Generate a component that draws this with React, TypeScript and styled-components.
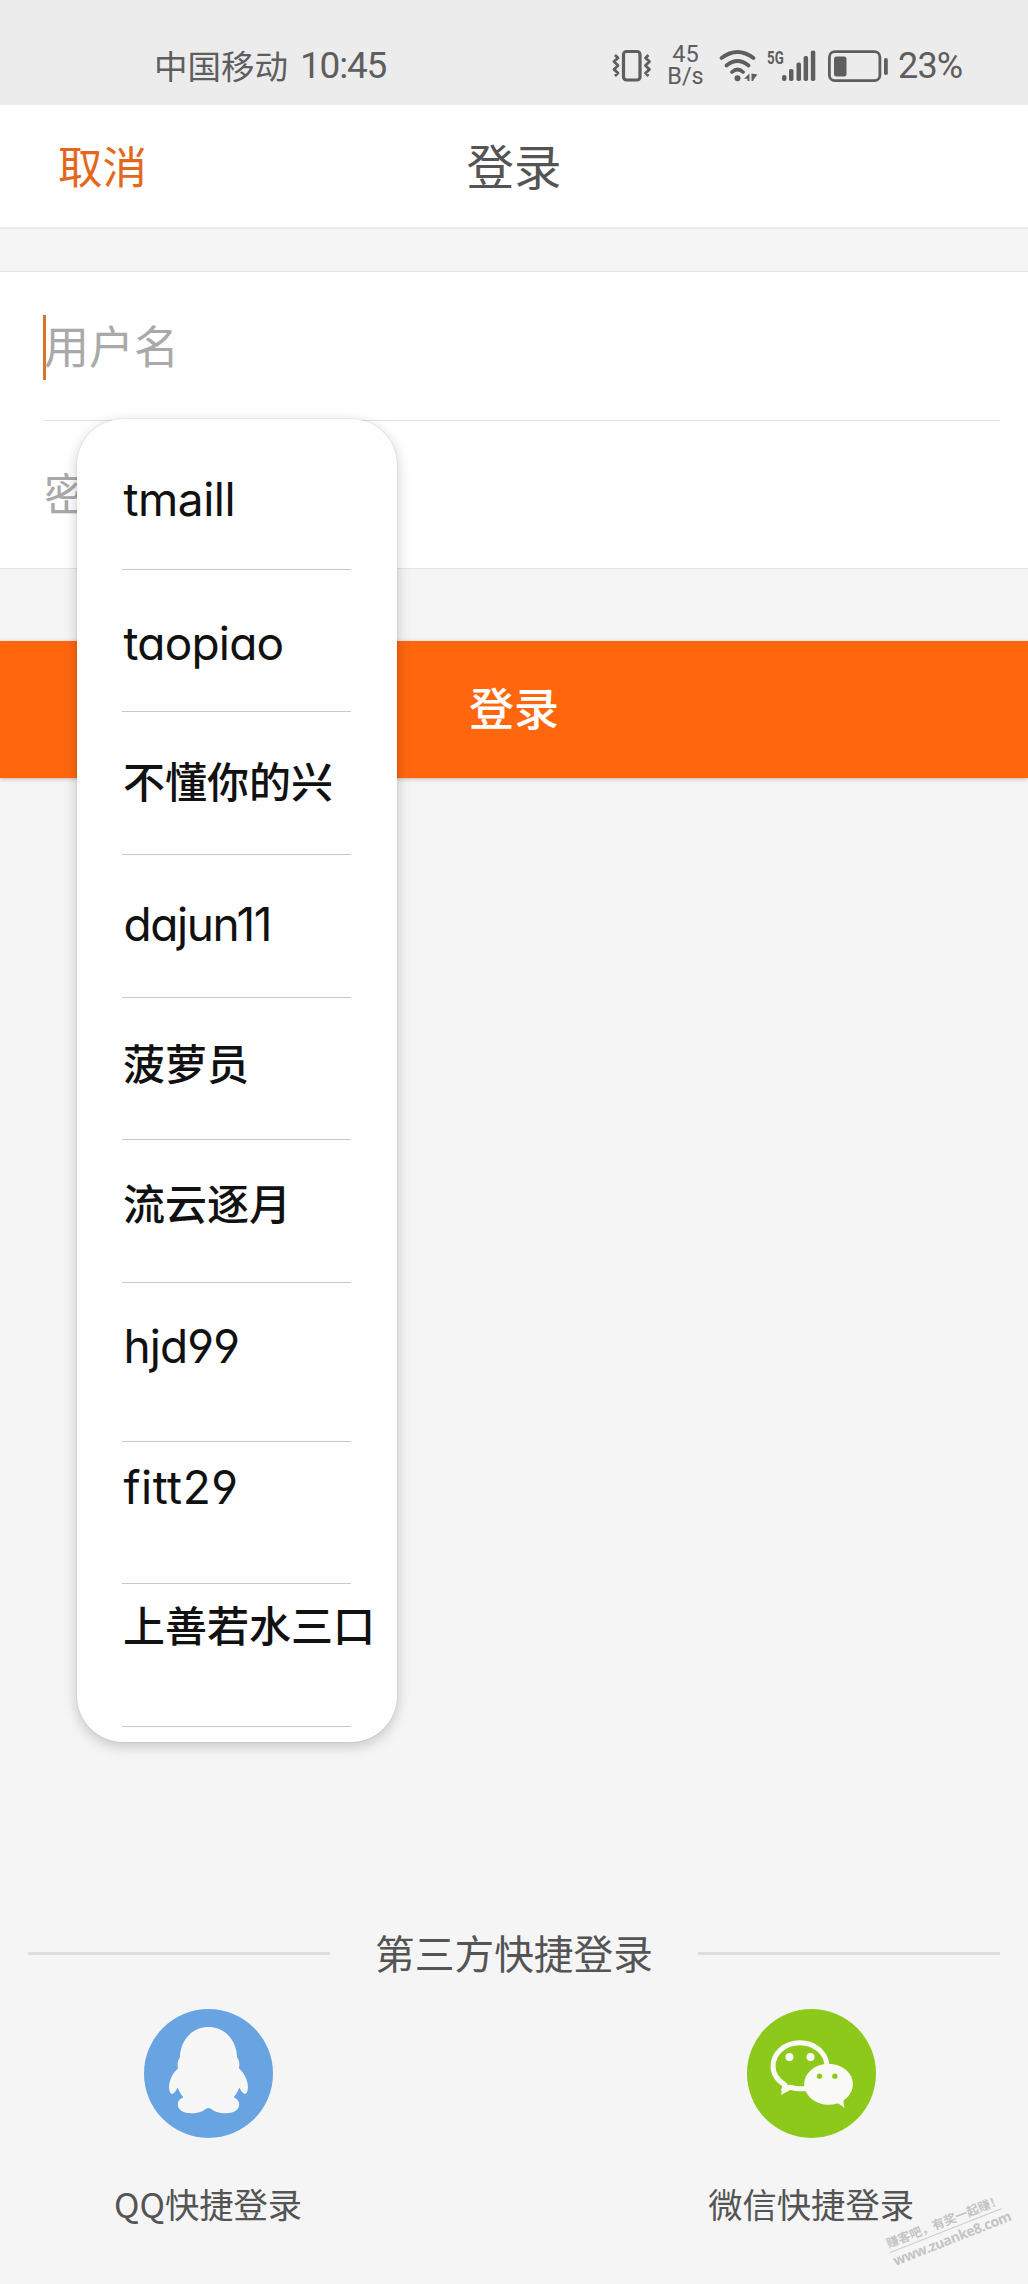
import React from "react";
import styled, { createGlobalStyle, css } from "styled-components";

const cjk = `"Noto Sans CJK SC", sans-serif`;

const GlobalStyle = createGlobalStyle`
  *, *::before, *::after { box-sizing: border-box; }
  body { margin: 0; background: #f5f5f5; }
`;

const Screen = styled.div`
  position: relative;
  display: flex;
  flex-direction: column;
  width: 1028px;
  height: 2284px;
  overflow: hidden;
  background: #f5f5f5;
  color: #545454;
  font-family: ${cjk};
`;

const StatusBar = styled.header`
  display: flex;
  align-items: center;
  justify-content: space-between;
  height: 105px;
  padding: 26px 64px 0 154px;
  background: #ececec;
  color: #5e5e5e;
`;

const Carrier = styled.div`
  display: flex;
  align-items: center;
  gap: 12px;
  padding-bottom: 2px;
  font-size: 33.5px;
  line-height: 40px;
`;

const Clock = styled.time`
  padding-top: 2px;
  font-family: Roboto, sans-serif;
  font-size: 37px;
  letter-spacing: -1.2px;
`;

const StatusIcons = styled.div`
  display: flex;
  align-items: center;
`;

const StatusSvg = styled.svg<{ $gap: number }>`
  display: block;
  flex: none;
  margin-right: ${(p) => p.$gap}px;
`;

const NetSpeed = styled.div`
  display: flex;
  flex-direction: column;
  align-items: center;
  width: 38px;
  margin-right: 14px;
  font-family: Roboto, sans-serif;
  font-size: 23.5px;
  line-height: 21.5px;
`;

const NetType = styled.span`
  width: 15.5px;
  height: 38px;
  font: 700 18.5px/22px Roboto, sans-serif;
  transform: scaleX(0.72);
  transform-origin: 0 0;
`;

const BatteryText = styled.span`
  width: 66px;
  font-family: Roboto, sans-serif;
  font-size: 36px;
  line-height: 40px;
  letter-spacing: -0.8px;
`;

const TitleBar = styled.div`
  display: grid;
  grid-template-columns: 1fr auto 1fr;
  align-items: center;
  height: 124px;
  padding: 0 57px 3px;
  background: #fff;
  border-bottom: 2px solid #e9e9e9;
`;

const CancelButton = styled.button`
  justify-self: start;
  padding: 0 0 0 1px;
  border: 0;
  background: none;
  color: #e4681c;
  font: 400 44.5px/60px ${cjk};
`;

const Title = styled.h1`
  margin: 0;
  font-size: 47.5px;
  font-weight: 400;
  line-height: 60px;
`;

const Form = styled.form`
  display: flex;
  flex-direction: column;
  margin-top: 42px;
  padding: 0 28px 0 43px;
  background: #fff;
  border-top: 1px solid #e2e2e2;
  border-bottom: 1px solid #e2e2e2;
`;

const Field = styled.div<{ $divided?: boolean }>`
  display: flex;
  align-items: center;
  height: ${(p) => (p.$divided ? 149 : 147)}px;
  border-bottom: ${(p) => (p.$divided ? "1px solid #e2e2e2" : "0")};
`;

const Caret = styled.i`
  width: 3px;
  height: 65px;
  margin: 2px -3px 0 0;
  background: #d9742c;
`;

const Placeholder = styled.span`
  padding: 0 0 3px 1px;
  color: #a9a9a9;
  font-size: 45px;
  line-height: 60px;
`;

const LoginButton = styled.button`
  height: 137px;
  margin-top: 72px;
  padding: 0 0 6px;
  border: 0;
  background: #ff660e;
  box-shadow: 0 1px 4px rgba(120, 60, 20, 0.35);
  color: #fff;
  font: 500 45px/60px ${cjk};
`;

const Popup = styled.ul`
  position: absolute;
  top: 419px;
  left: 77px;
  width: 320px;
  height: 1323px;
  margin: 0;
  padding: 0 46px 0 45px;
  list-style: none;
  background: #fefefe;
  border-radius: 46px;
  box-shadow: 0 4px 14px rgba(0, 0, 0, 0.2), 0 0 2px rgba(0, 0, 0, 0.14);
`;

const Suggestion = styled.li<{ $height: number; $top: number }>`
  height: ${(p) => p.$height}px;
  padding-top: ${(p) => p.$top}px;
  border-bottom: 1px solid #c9c9c9;
  white-space: nowrap;
`;

const Name = styled.span<{ $latin?: boolean; $round?: boolean; $spacing?: number }>`
  display: block;
  color: #111;
  font-family: Inter, ${cjk};
  line-height: 60px;
  ${(p) =>
    p.$latin
      ? css`
          padding-left: 1.5px;
          font-size: 46px;
          font-weight: 400;
          font-feature-settings: ${p.$round ? `"cv11", "cv04"` : "normal"};
          letter-spacing: ${p.$spacing ?? 0}px;
        `
      : css`
          padding-left: 1px;
          font-size: 42px;
          font-weight: 500;
        `}
`;

const ThirdParty = styled.section`
  display: flex;
  flex-direction: column;
  margin-top: 1145px;
`;

const Divider = styled.div`
  display: flex;
  align-items: center;
  gap: 45px;
  height: 60px;
  padding: 0 28px;
  line-height: 60px;

  &::before,
  &::after {
    content: "";
    flex: 1;
    height: 3px;
    background: #dedede;
  }
`;

const DividerText = styled.span`
  padding-bottom: 2px;
  font-size: 39.7px;
`;

const Providers = styled.div`
  display: flex;
  justify-content: space-between;
  padding: 26px 114px 0;
`;

const Provider = styled.a`
  display: flex;
  flex-direction: column;
  align-items: center;
  gap: 42px;
  font-size: 34.3px;
  line-height: 46px;
`;

const ProviderIcon = styled.svg`
  display: block;
  width: 129px;
  height: 129px;
`;

const Watermark = styled.div`
  position: absolute;
  left: 886px;
  top: 2212px;
  width: 120px;
  color: #c4c4c4;
  white-space: nowrap;
  transform: rotate(-21.5deg);
`;

const WatermarkSlogan = styled.div`
  border-bottom: 1px solid #cdcdcd;
  font-size: 12.3px;
  font-weight: 700;
  line-height: 18px;
`;

const WatermarkUrl = styled.div`
  font: 700 14px/18px "Open Sans", sans-serif;
  letter-spacing: -0.45px;
`;

const suggestions = [
  { name: "tmaill", height: 151, top: 50, latin: true, spacing: -0.5 },
  { name: "taopiao", height: 142, top: 43, latin: true, round: true, spacing: -0.8 },
  { name: "不懂你的兴", height: 143, top: 41 },
  { name: "dajun11", height: 143, top: 39, latin: true, round: true, spacing: -1.4 },
  { name: "菠萝员", height: 142, top: 37 },
  { name: "流云逐月", height: 143, top: 35 },
  { name: "hjd99", height: 159, top: 33, latin: true, round: true, spacing: -0.9 },
  { name: "fitt29", height: 142, top: 15, latin: true, round: true, spacing: 0.5 },
  { name: "上善若水三口", height: 143, top: 13 },
];

const VibrateIcon = () => (
  <StatusSvg $gap={15} width="40" height="34" viewBox="0 0 40 34" fill="none" stroke="currentColor" strokeWidth="3.2">
    <rect x="11.5" y="2.500" width="16.500" height="28.500" rx="3" />
    <path d="M3 6l3 3-4 3.500 4 4-4 4 4 3.500-3 3M36.500 6l-3 3 4 3.500-4 4 4 4-4 3.500 3 3" strokeWidth="2.800" strokeLinejoin="round" />
  </StatusSvg>
);

const WifiIcon = () => (
  <StatusSvg $gap={9} width="39" height="34" viewBox="0 0 39 34" fill="none" stroke="currentColor" strokeWidth="3.700" strokeLinecap="round">
    <path d="M2.500 9Q18.500-3 34.500 9M7.500 16.500Q18.500 7.500 29.500 16.500M13 23Q18.500 18 24 23" />
    <circle cx="18.500" cy="29.300" r="3" fill="currentColor" stroke="none" />
    <path d="M30.500 24.500v7.500h-2v-2.200h-3.500zM32.500 24.500l6 1-3.500 4.500-1 2h-1.500z" fill="currentColor" stroke="none" />
  </StatusSvg>
);

const SignalIcon = () => (
  <StatusSvg $gap={12} width="34" height="34" viewBox="0 0 34 34" fill="currentColor">
    <rect x="0" y="26" width="4.500" height="6" rx="2" />
    <rect x="7" y="20" width="4.500" height="12" rx="1.800" />
    <rect x="14.500" y="13.500" width="4.500" height="18.500" rx="1.800" />
    <rect x="21.600" y="7" width="4.500" height="25" rx="1.800" />
    <rect x="28.800" y="1.500" width="4.500" height="30.500" rx="1.800" />
  </StatusSvg>
);

const BatteryIcon = () => (
  <StatusSvg $gap={10} width="60" height="34" viewBox="0 0 60 34" fill="currentColor">
    <rect x="1.400" y="2.700" width="50.500" height="29" rx="5.500" fill="none" stroke="currentColor" strokeWidth="2.800" />
    <rect x="6" y="7.500" width="12.500" height="20" rx="2.500" />
    <rect x="56" y="9" width="3.800" height="17" rx="1.800" />
  </StatusSvg>
);

const QQIcon = () => (
  <ProviderIcon viewBox="0 0 386 386">
    <circle cx="193" cy="193" r="193" fill="#69a4e2" />
    <path
      fill="#f7f7f7"
      d="M193 54C148 54 110 88 107 146C101 153 99 166 102 177C86 192 75 213 75 233C75 246 79 255 85 254C92 251 96 244 101 235C105 247 110 256 118 264C107 268 101 276 101 286C102 303 118 312 142 312C162 312 176 306 185 299Q193 293 201 299C210 306 224 312 244 312C268 312 284 303 285 286C285 276 279 268 268 264C276 256 281 247 285 235C290 244 294 251 301 254C307 255 311 246 311 233C311 213 300 192 284 177C287 166 285 153 279 146C276 88 238 54 193 54Z"
    />
  </ProviderIcon>
);

const WeChatIcon = () => (
  <ProviderIcon viewBox="0 0 386 386">
    <circle cx="193" cy="193" r="193" fill="#8dc91b" />
    <g fill="#f9faf5">
      <path
        d="M176 238.500H158Q142 239 128 234L110 243L114 227C92 214 78 194 78 171C78 133 113 101 158 101C203 101 237 132 239 168"
        fill="none"
        stroke="#f9faf5"
        strokeWidth="15"
        strokeLinejoin="round"
      />
      <path d="M106 226C107 238 105 248 101 257C112 252 121 247 130 240Z" />
      <circle cx="127" cy="144" r="12" />
      <circle cx="190" cy="144" r="12" />
      <ellipse cx="244" cy="225" rx="73" ry="61.500" />
      <path d="M265 280C276 284 285 290 292 297C290 287 288 278 289 266Z" />
    </g>
    <circle cx="217" cy="201" r="8" fill="#8dc91b" />
    <circle cx="263" cy="201" r="8" fill="#8dc91b" />
  </ProviderIcon>
);

export default function App() {
  return (
    <>
      <GlobalStyle />
      <Screen>
        <StatusBar>
          <Carrier>
            <span>中国移动</span>
            <Clock>10:45</Clock>
          </Carrier>
          <StatusIcons>
            <VibrateIcon />
            <NetSpeed>
              <span>45</span>
              <span>B/s</span>
            </NetSpeed>
            <WifiIcon />
            <NetType>5G</NetType>
            <SignalIcon />
            <BatteryIcon />
            <BatteryText>23%</BatteryText>
          </StatusIcons>
        </StatusBar>
        <TitleBar>
          <CancelButton type="button">取消</CancelButton>
          <Title>登录</Title>
        </TitleBar>
        <Form>
          <Field $divided>
            <Caret />
            <Placeholder>用户名</Placeholder>
          </Field>
          <Field>
            <Placeholder>密码</Placeholder>
          </Field>
        </Form>
        <LoginButton type="button">登录</LoginButton>
        <ThirdParty>
          <Divider>
            <DividerText>第三方快捷登录</DividerText>
          </Divider>
          <Providers>
            <Provider>
              <QQIcon />
              QQ快捷登录
            </Provider>
            <Provider>
              <WeChatIcon />
              微信快捷登录
            </Provider>
          </Providers>
        </ThirdParty>
        <Popup>
          {suggestions.map((s) => (
            <Suggestion key={s.name} $height={s.height} $top={s.top}>
              <Name $latin={s.latin} $round={s.round} $spacing={s.spacing}>
                {s.name}
              </Name>
            </Suggestion>
          ))}
        </Popup>
        <Watermark>
          <WatermarkSlogan>赚客吧，有奖一起赚！</WatermarkSlogan>
          <WatermarkUrl>www.zuanke8.com</WatermarkUrl>
        </Watermark>
      </Screen>
    </>
  );
}
